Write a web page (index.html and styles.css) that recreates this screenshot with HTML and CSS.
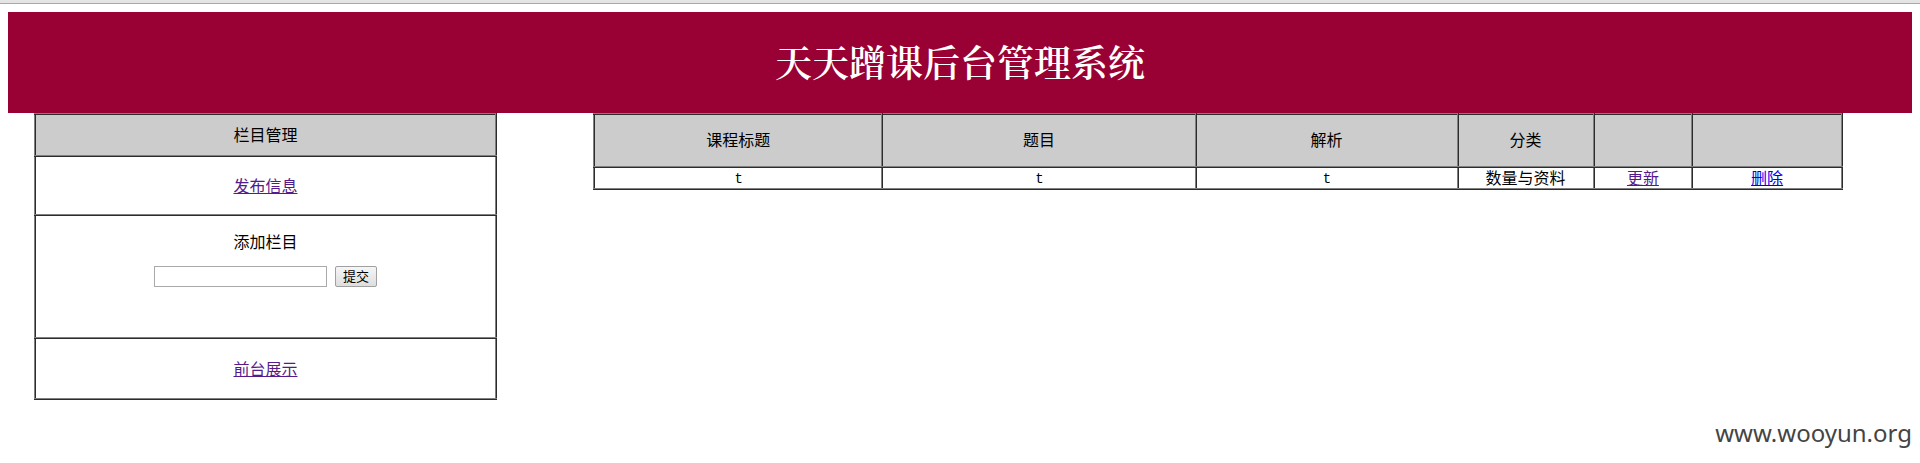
FILE: index.html
```html
<!DOCTYPE html>
<html lang="zh-CN">
<head>
<meta charset="utf-8">
<title>天天蹭课后台管理系统</title>
<link rel="stylesheet" href="styles.css">
</head>
<body>
<div class="top-edge"></div>
<div class="page">
  <header class="banner"><h1 class="banner-title">天天蹭课后台管理系统</h1></header>
  <main class="content">
    <table class="grid menu">
      <tbody>
        <tr class="menu-head"><th>栏目管理</th></tr>
        <tr class="menu-link"><td><a class="visited" href="#publish">发布信息</a></td></tr>
        <tr class="menu-add"><td>
          <form class="add-form">
            <label class="add-label" for="column-name">添加栏目</label>
            <div class="add-row">
              <input class="add-input" id="column-name" type="text">
              <button class="add-button" type="submit">提交</button>
            </div>
          </form>
        </td></tr>
        <tr class="menu-last"><td><a class="visited" href="#front">前台展示</a></td></tr>
      </tbody>
    </table>
    <table class="grid courses">
      <colgroup>
        <col class="col-title"><col class="col-question"><col class="col-analysis">
        <col class="col-category"><col class="col-update"><col class="col-delete">
      </colgroup>
      <thead>
        <tr><th>课程标题</th><th>题目</th><th>解析</th><th>分类</th><th></th><th></th></tr>
      </thead>
      <tbody>
        <tr>
          <td class="mono">t</td><td class="mono">t</td><td class="mono">t</td>
          <td>数量与资料</td>
          <td><a class="visited" href="#update">更新</a></td>
          <td><a href="#delete">删除</a></td>
        </tr>
      </tbody>
    </table>
  </main>
  <footer class="site-mark">www.wooyun.org</footer>
</div>
</body>
</html>
```
FILE: styles.css
```css
* { box-sizing: border-box; }

body {
  margin: 0;
  background: #fff;
  color: #000;
  font-family: "Noto Sans CJK SC", sans-serif;
  font-size: 16px;
  line-height: 20px;
}

.top-edge {
  height: 4px;
  background: #e4e4e4;
  border-bottom: 1px solid #a9a9a9;
}

.page { padding: 8px 8px 0; }

.banner {
  padding: 25px 0 28px;
  background: #990033;
  color: #fff;
  text-align: center;
}

.banner-title {
  margin: 0;
  font-family: "Noto Serif CJK SC", "Noto Sans CJK SC", serif;
  font-size: 37px;
  font-weight: 600;
  line-height: 48px;
}

.content {
  display: grid;
  grid-template-columns: 463fr 1250fr;
  column-gap: 96px;
  align-items: start;
  padding: 0 69px 0 26px;
}

.grid {
  width: 100%;
  border-collapse: collapse;
  table-layout: fixed;
}

.grid th,
.grid td {
  padding: 0;
  border: 2px ridge #808080;
  font-weight: 400;
  text-align: center;
}

.grid th { background: #ccc; }

.menu-head th { height: 42px; padding-bottom: 2px; }
.menu-link td { height: 59px; padding-bottom: 2px; }
.menu-add td { height: 123px; vertical-align: top; }
.menu-last td { height: 61px; padding-bottom: 2px; }

.add-form { padding-top: 15px; }
.add-label { display: block; }

.add-row {
  display: flex;
  justify-content: center;
  gap: 8px;
  margin-top: 15px;
}

.add-input {
  width: 173px;
  height: 21px;
  padding: 1px;
  border: 1px solid #a9a9a9;
  background: #fff;
}

.add-button {
  height: 21px;
  padding: 0 7px 2px;
  border: 1px solid #a0a0a0;
  border-radius: 2px;
  background: linear-gradient(#f6f6f6, #dedede);
  color: #000;
  font-family: inherit;
  font-size: 13px;
  line-height: 17px;
}

.courses th { height: 53px; padding-bottom: 3px; }
.courses td { height: 22px; line-height: 18px; padding-bottom: 2px; }
.courses .mono {
  padding: 1px 0 0 1px;
  font-family: "Liberation Mono", monospace;
  font-size: 14px;
}

.col-title { width: 23.1%; }
.col-question { width: 25.1%; }
.col-analysis { width: 21%; }
.col-category { width: 10.9%; }
.col-update { width: 7.9%; }
.col-delete { width: 12%; }

a { color: #0000ee; }
a.visited { color: #551a8b; }

.site-mark {
  padding-top: 15px;
  color: #444;
  font-family: "Noto Sans", sans-serif;
  font-size: 24px;
  line-height: 36px;
  text-align: right;
}
```
